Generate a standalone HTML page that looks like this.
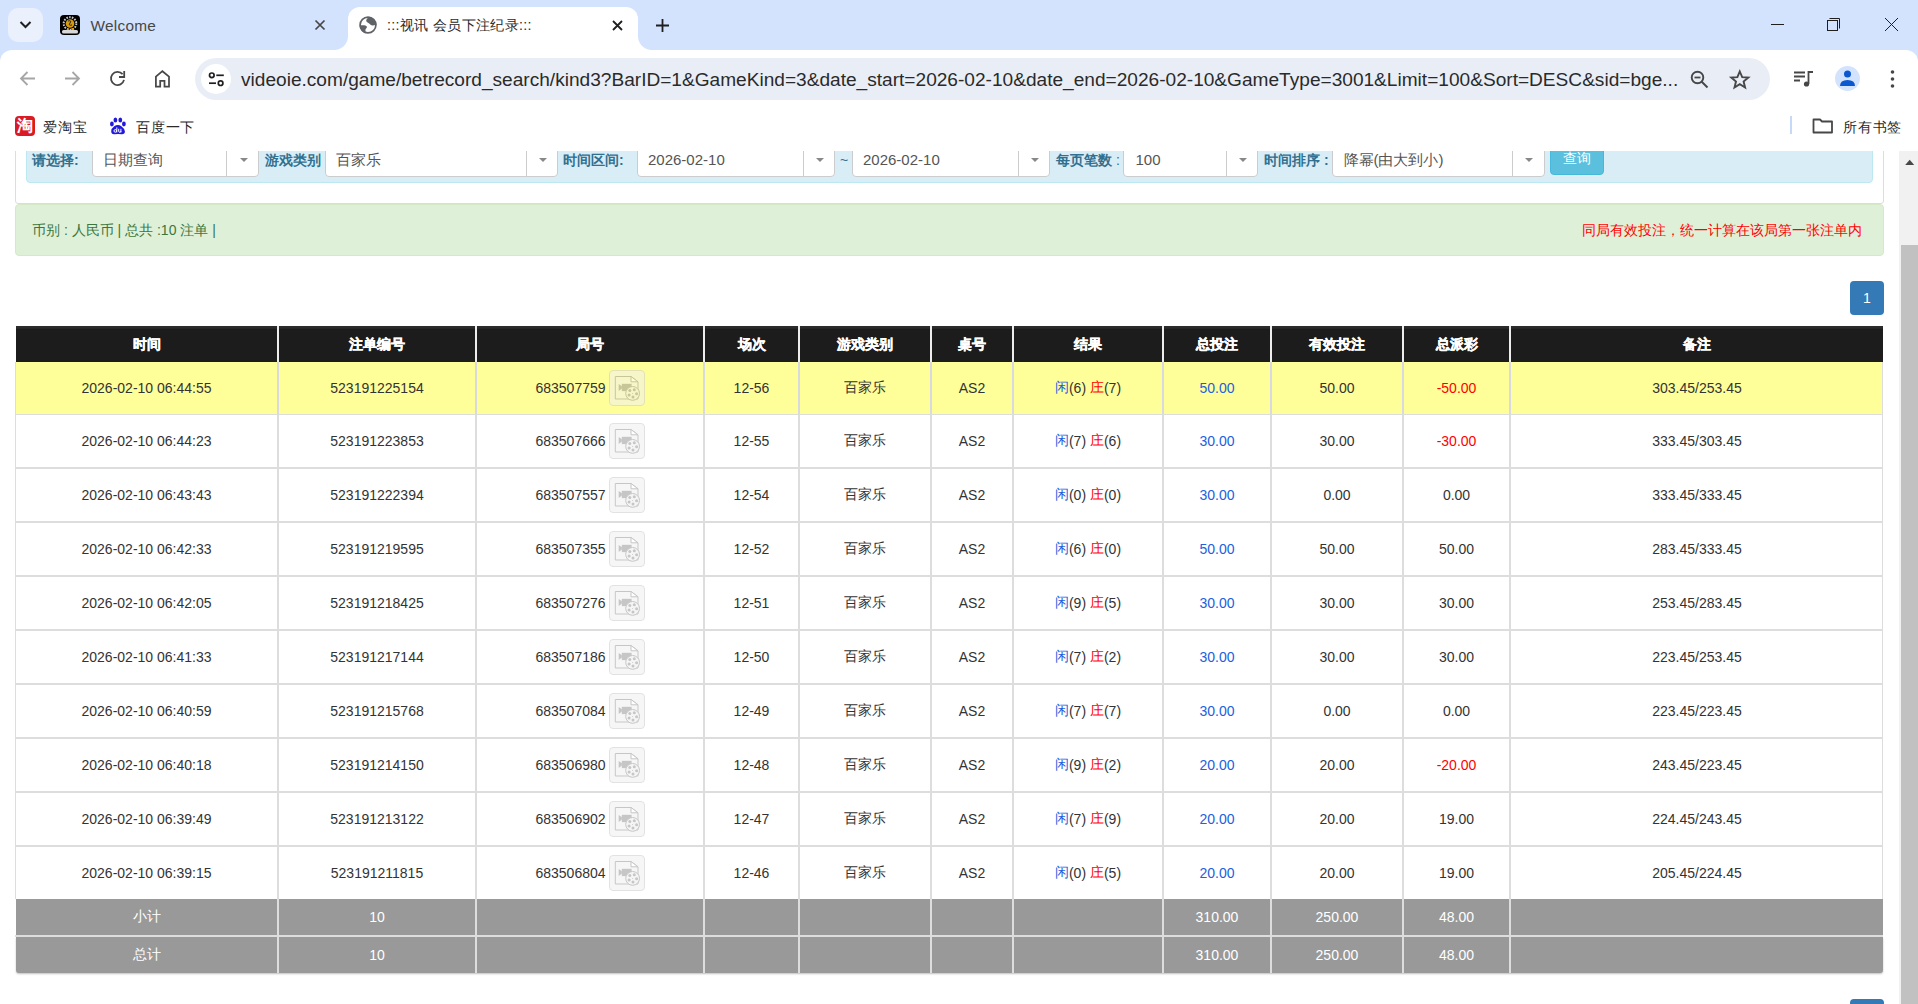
<!DOCTYPE html>
<html><head><meta charset="utf-8">
<style>
*{margin:0;padding:0;box-sizing:border-box}
html,body{width:1918px;height:1004px;overflow:hidden;background:#fff;font-family:"Liberation Sans",sans-serif;color:#333}
.abs{position:absolute}
#tabstrip{position:absolute;left:0;top:0;width:1918px;height:70px;background:#d3e3fd}
#toolbar{position:absolute;left:0;top:50px;width:1918px;height:101px;background:#fff;border-radius:12px 12px 0 0}
#bookmarks{position:absolute;left:0;top:104px;width:1918px;height:47px;background:#fff}
#content{position:absolute;left:0;top:151px;width:1899px;height:853px;background:#fff;overflow:hidden}
#scroll{position:absolute;left:1899px;top:151px;width:19px;height:853px;background:#f1f1f1}
.txt{position:absolute;white-space:nowrap;line-height:1}
svg{position:absolute;overflow:visible}
.c{position:absolute;display:flex;align-items:center;justify-content:center;font-size:14px;white-space:nowrap;color:#333}
.bl{color:#2161e0}.rd{color:#f00}
.c>span{display:flex;align-items:center;white-space:pre}
.ib{display:inline-block;flex:none;width:36px;height:36px;margin-left:3px;border:1px solid #ccc;border-radius:4px;background:#f0f0f0;opacity:.55;position:relative}
.ib svg{position:absolute;left:-1px;top:-1px;width:35px;height:35px}
.lb{position:absolute;top:152px;font-size:14px;line-height:16px;font-weight:bold;color:#31708f;white-space:nowrap}
.st{position:absolute;top:151px;font-size:15px;line-height:18px;color:#555;white-space:nowrap}
.sel{position:absolute;top:120px;height:57px;border:1px solid #ccc;border-radius:4px;background:#fff}
.sel i{position:absolute;top:0;bottom:0;width:1px;background:#ccc}
.sel b{position:absolute;top:37px;width:0;height:0;border-left:4px solid transparent;border-right:4px solid transparent;border-top:4.5px solid #888}
.pg{position:absolute;left:1850px;width:34px;height:34px;border-radius:4px;background:#337ab7;color:#fff;font-size:14px;line-height:34px;text-align:center}

</style></head><body>
<div id="tabstrip"></div>
<div class="abs" style="left:8px;top:8px;width:35px;height:34px;border-radius:10px;background:#eaf1fd"></div>
<div class="abs" style="left:348px;top:7px;width:290px;height:44px;background:#fff;border-radius:12px 12px 0 0"></div>
<div class="abs" style="left:334px;top:36px;width:14px;height:14px;background:radial-gradient(circle at 0 0,transparent 13.5px,#fff 14.5px)"></div>
<div class="abs" style="left:638px;top:36px;width:14px;height:14px;background:radial-gradient(circle at 14px 0,transparent 13.5px,#fff 14.5px)"></div>
<div id="toolbar"></div>
<div class="abs" style="left:195px;top:58px;width:1575px;height:42px;border-radius:21px;background:#e9eef6"></div>
<div class="abs" style="left:201px;top:64px;width:30px;height:30px;border-radius:15px;background:#fff"></div>
<div class="abs" style="left:1835px;top:66px;width:25px;height:25px;border-radius:13px;background:#d3e3fd"></div>
<div class="abs" style="left:15px;top:116px;width:20px;height:20px;border-radius:4px;background:#db1b24"></div>
<div class="abs" style="left:1790px;top:116px;width:2px;height:18px;background:#c7d9f8"></div>
<div class="abs" style="left:60px;top:15px;width:20px;height:20px;border-radius:4px;background:#000"></div>

<div class="txt" style="left:90.5px;top:15.5px;font-size:15.4px;line-height:19px;color:#474747;letter-spacing:0.25px">Welcome</div>
<div class="txt" style="left:387px;top:16px;font-size:14.2px;line-height:18px;color:#2a2a2a;letter-spacing:0.35px">:::视讯 会员下注纪录:::</div>
<div class="txt" style="left:241px;top:69px;font-size:19.1px;line-height:22px;color:#2a2a2a">videoie.com/game/betrecord_search/kind3?BarID=1&amp;GameKind=3&amp;date_start=2026-02-10&amp;date_end=2026-02-10&amp;GameType=3001&amp;Limit=100&amp;Sort=DESC&amp;sid=bge...</div>
<div class="txt" style="left:43px;top:118.5px;font-size:14.2px;line-height:17px;color:#2a2a2a;letter-spacing:0.8px">爱淘宝</div>
<div class="txt" style="left:136px;top:118.5px;font-size:14.2px;line-height:17px;color:#2a2a2a;letter-spacing:0.8px">百度一下</div>
<div class="txt" style="left:1843px;top:118.5px;font-size:14.2px;line-height:17px;color:#2a2a2a;letter-spacing:0.8px">所有书签</div>
<div class="txt" style="left:17px;top:117px;font-size:16px;line-height:18px;color:#fff;font-weight:bold">淘</div>

<svg style="left:0;top:0" width="1918" height="151">
 <!-- tab search chevron -->
 <path d="M20.5 22 L25.5 27 L30.5 22" fill="none" stroke="#1f1f1f" stroke-width="2"/>
 <!-- welcome favicon logo -->
 <g><circle cx="70" cy="23.5" r="6.3" fill="none" stroke="#c8c8c8" stroke-width="2" stroke-dasharray="1.6 1.2"/><circle cx="70" cy="23.5" r="4.3" fill="#d49a12"/><path d="M68 21 Q72 20 70 23 Q68 26 72 25" stroke="#222" stroke-width="1" fill="none"/>
 <rect x="62" y="30" width="16" height="3.4" rx="1.5" fill="#d8d8d8"/><rect x="67" y="28" width="1.6" height="2" fill="#e0a010"/><rect x="71.4" y="28" width="1.6" height="2" fill="#e0a010"/></g>
 <!-- inactive close -->
 <path d="M315.5 20.5 L324.5 29.5 M324.5 20.5 L315.5 29.5" stroke="#474747" stroke-width="1.7"/>
 <!-- globe -->
 <g transform="translate(368 25)" fill="#5f6368"><circle r="7.9" fill="none" stroke="#5f6368" stroke-width="1.7"/>
 <path d="M1 -8.2 C0 -7 -1.8 -5.8 -1.8 -4.2 C-1.8 -2.6 0.8 -2.2 1.8 -1 C2.8 0.6 4.5 0.8 8.5 -0.3 A8.6 8.6 0 0 0 1 -8.2 Z"/>
 <path d="M-8.5 0.4 C-5 -0.1 -2 0 -1.2 1.5 C-0.5 3 -2.6 3.5 -2.6 5 C-2.6 6.5 -2.2 7.8 -1.5 8.6 A8.6 8.6 0 0 1 -8.5 0.4 Z"/></g>
 <!-- active close -->
 <path d="M613 21 L622 30 M622 21 L613 30" stroke="#1f1f1f" stroke-width="1.8"/>
 <!-- new tab -->
 <path d="M662.5 19 V32 M656 25.5 H669" stroke="#1f1f1f" stroke-width="1.8"/>
 <!-- window controls -->
 <path d="M1771 24.5 H1784" stroke="#1f1f1f" stroke-width="1"/>
 <rect x="1827.5" y="20.5" width="10" height="10" fill="none" stroke="#1f1f1f"/><path d="M1829.5 18.5 H1839.5 V28.5" fill="none" stroke="#1f1f1f"/>
 <path d="M1885 18 L1898 31 M1898 18 L1885 31" stroke="#1f1f1f" stroke-width="1"/>
 <!-- back/forward -->
 <path d="M35 78.5 H21 M27.5 72 L21 78.5 L27.5 85" fill="none" stroke="#a6a6a6" stroke-width="1.8"/>
 <path d="M65 78.5 H79 M72.5 72 L79 78.5 L72.5 85" fill="none" stroke="#a6a6a6" stroke-width="1.8"/>
 <!-- reload -->
 <path d="M122.6 74.2 A6.6 6.6 0 1 0 124 79.9" fill="none" stroke="#474747" stroke-width="1.8"/>
 <path d="M119 77 H124.2 V71" fill="none" stroke="#474747" stroke-width="1.8"/>
 <!-- home -->
 <path d="M155.9 86.5 V76.6 L162.4 71.2 L169 76.6 V86.5 H164.5 V80.9 H160.2 V86.5 Z" fill="none" stroke="#474747" stroke-width="1.75" stroke-linejoin="miter"/>
 <!-- tune icon -->
 <circle cx="211.8" cy="75.3" r="2.3" fill="none" stroke="#1f1f1f" stroke-width="1.7"/><path d="M216.3 75.3 H223.8" stroke="#1f1f1f" stroke-width="1.7"/>
 <circle cx="220.6" cy="83.2" r="2.3" fill="none" stroke="#1f1f1f" stroke-width="1.7"/><path d="M209 83.2 H216" stroke="#1f1f1f" stroke-width="1.7"/>
 <!-- zoom -->
 <circle cx="1697.5" cy="77.5" r="5.8" fill="none" stroke="#474747" stroke-width="1.9"/><path d="M1701.5 81.5 L1707.5 87.5" stroke="#474747" stroke-width="2"/><path d="M1694.5 77.5 H1700.5" stroke="#474747" stroke-width="1.8"/>
 <!-- star -->
 <path d="M1739.8 71.5 L1742.2 77.2 L1748.3 77.6 L1743.6 81.5 L1745.1 87.5 L1739.8 84.2 L1734.5 87.5 L1736 81.5 L1731.3 77.6 L1737.4 77.2 Z" fill="none" stroke="#474747" stroke-width="1.9" stroke-linejoin="miter"/>
 <!-- media -->
 <path d="M1794 72.5 H1805 M1794 76.5 H1805 M1794 80.5 H1800" stroke="#474747" stroke-width="1.8"/>
 <path d="M1808.5 84 V72 H1813" fill="none" stroke="#474747" stroke-width="1.8"/><circle cx="1806.5" cy="84" r="2.6" fill="#474747"/>
 <!-- profile -->
 <circle cx="1847.5" cy="74" r="3.5" fill="#0b57d0"/><path d="M1840 86 Q1840 80 1847.5 80 Q1855 80 1855 86 Z" fill="#0b57d0"/>
 <!-- menu -->
 <circle cx="1892.5" cy="72" r="1.8" fill="#474747"/><circle cx="1892.5" cy="79" r="1.8" fill="#474747"/><circle cx="1892.5" cy="86" r="1.8" fill="#474747"/>
 <!-- baidu paw -->
 <g fill="#2319dc"><ellipse cx="115.4" cy="120" rx="1.9" ry="2.5"/><ellipse cx="120.3" cy="120" rx="1.9" ry="2.5"/><ellipse cx="111.9" cy="124" rx="1.9" ry="2.4"/><ellipse cx="123.9" cy="124" rx="1.9" ry="2.4"/>
 <path d="M111.2 131.3 Q111.2 128.3 114.2 126.2 Q117.9 123.6 121.4 126.2 Q124.9 128.8 124.9 131.6 Q124.9 134.4 121.6 134.2 Q117.9 133.8 114.6 134.2 Q111.2 134.5 111.2 131.3 Z"/></g>
 <g fill="none" stroke="#fff" stroke-width="1"><circle cx="115.3" cy="130.9" r="1.3"/><path d="M116.8 127.4 V132.4 M118.7 128.8 V131.2 Q118.7 132.3 119.8 132.3 Q120.9 132.3 120.9 131.2 V128.8 M120.9 131 V132.4"/></g>
 <!-- folder -->
 <path d="M1813.5 119.5 H1820 L1822 121.5 H1832 V132.5 H1813.5 Z" fill="none" stroke="#474747" stroke-width="1.8" stroke-linejoin="round"/>
</svg>

<div id="content"><div class="abs" style="left:0;top:-151px;width:1899px;height:1004px">
<div class="abs" style="left:15px;top:100px;width:1869px;height:104px;border:1px solid #ddd;border-radius:0 0 3px 3px;background:#fff"></div>
<div class="abs" style="left:26px;top:100px;width:1847px;height:83px;border:1px solid #bce8f1;border-radius:4px;background:#d9edf7"></div>
<div class="lb" style="left:32px">请选择:</div>
<div class="sel" style="left:92px;width:167px"><i style="left:133px"></i><b style="left:147px"></b></div>
<div class="st" style="left:103px">日期查询</div>
<div class="lb" style="left:265px">游戏类别</div>
<div class="sel" style="left:325px;width:233px"><i style="left:200px"></i><b style="left:213px"></b></div>
<div class="st" style="left:336px">百家乐</div>
<div class="lb" style="left:563px">时间区间:</div>
<div class="sel" style="left:637px;width:198px"><i style="left:165px"></i><b style="left:178px"></b></div>
<div class="st" style="left:648px">2026-02-10</div>
<div class="lb" style="left:840px;font-weight:normal">~</div>
<div class="sel" style="left:852px;width:198px"><i style="left:165px"></i><b style="left:178px"></b></div>
<div class="st" style="left:863px">2026-02-10</div>
<div class="lb" style="left:1056px">每页笔数<span style="font-weight:normal"> :</span></div>
<div class="sel" style="left:1123px;width:135px"><i style="left:102px"></i><b style="left:115px"></b></div>
<div class="st" style="left:1135.5px">100</div>
<div class="lb" style="left:1264px">时间排序 :</div>
<div class="sel" style="left:1332px;width:213px"><i style="left:179px"></i><b style="left:192px"></b></div>
<div class="st" style="left:1343.5px">降幂(由大到小)</div>
<div class="abs" style="left:1550px;top:130px;width:54px;height:45px;border:1px solid #46b8da;border-radius:4px;background:#5bc0de"></div>
<div class="txt" style="left:1563px;top:150px;font-size:14px;line-height:16px;color:#fff">查询</div>

<div class="abs" style="left:15px;top:204px;width:1869px;height:52px;border:1px solid #d6e9c6;border-radius:4px;background:#dff0d8"></div>
<div class="txt" style="left:32px;top:222px;font-size:14px;line-height:16px;color:#3c763d">币别 : 人民币 | 总共 :10 注单 |</div>
<div class="txt" style="left:1582px;top:222px;font-size:14px;line-height:16px;color:#f00">同局有效投注，统一计算在该局第一张注单内</div>

<div class="pg" style="top:281px">1</div>
<div class="pg" style="top:999px">1</div>

<div class="abs" style="left:16px;top:326px;width:1867px;height:36px;background:linear-gradient(#2b2b2b 0,#2b2b2b 2px,#1c1c1c 3.5px)"></div>
<div class="c" style="left:16px;top:326px;width:261px;height:36px;color:#fff;font-weight:bold;padding-top:2px;-webkit-text-stroke:0.35px #fff"><span>时间</span></div>
<div class="c" style="left:279px;top:326px;width:196px;height:36px;color:#fff;font-weight:bold;padding-top:2px;-webkit-text-stroke:0.35px #fff"><span>注单编号</span></div>
<div class="c" style="left:477px;top:326px;width:226px;height:36px;color:#fff;font-weight:bold;padding-top:2px;-webkit-text-stroke:0.35px #fff"><span>局号</span></div>
<div class="c" style="left:705px;top:326px;width:93px;height:36px;color:#fff;font-weight:bold;padding-top:2px;-webkit-text-stroke:0.35px #fff"><span>场次</span></div>
<div class="c" style="left:800px;top:326px;width:130px;height:36px;color:#fff;font-weight:bold;padding-top:2px;-webkit-text-stroke:0.35px #fff"><span>游戏类别</span></div>
<div class="c" style="left:932px;top:326px;width:80px;height:36px;color:#fff;font-weight:bold;padding-top:2px;-webkit-text-stroke:0.35px #fff"><span>桌号</span></div>
<div class="c" style="left:1014px;top:326px;width:148px;height:36px;color:#fff;font-weight:bold;padding-top:2px;-webkit-text-stroke:0.35px #fff"><span>结果</span></div>
<div class="c" style="left:1164px;top:326px;width:106px;height:36px;color:#fff;font-weight:bold;padding-top:2px;-webkit-text-stroke:0.35px #fff"><span>总投注</span></div>
<div class="c" style="left:1272px;top:326px;width:130px;height:36px;color:#fff;font-weight:bold;padding-top:2px;-webkit-text-stroke:0.35px #fff"><span>有效投注</span></div>
<div class="c" style="left:1404px;top:326px;width:105px;height:36px;color:#fff;font-weight:bold;padding-top:2px;-webkit-text-stroke:0.35px #fff"><span>总派彩</span></div>
<div class="c" style="left:1511px;top:326px;width:372px;height:36px;color:#fff;font-weight:bold;padding-top:2px;-webkit-text-stroke:0.35px #fff"><span>备注</span></div>
<div class="abs" style="left:16px;top:362px;width:1867px;height:52px;background:#ffff99"></div>
<div class="abs" style="left:15px;top:414px;width:1868px;height:1px;background:#ddd"></div>
<div class="c" style="left:16px;top:362px;width:261px;height:52px;"><span>2026-02-10 06:44:55</span></div>
<div class="c" style="left:279px;top:362px;width:196px;height:52px;"><span>523191225154</span></div>
<div class="c" style="left:477px;top:362px;width:226px;height:52px;"><span>683507759<span class="ib"><svg width="26" height="26" viewBox="0 0 26 26"><use href="#vid"/></svg></span></span></div>
<div class="c" style="left:705px;top:362px;width:93px;height:52px;"><span>12-56</span></div>
<div class="c" style="left:800px;top:362px;width:130px;height:52px;"><span>百家乐</span></div>
<div class="c" style="left:932px;top:362px;width:80px;height:52px;"><span>AS2</span></div>
<div class="c" style="left:1014px;top:362px;width:148px;height:52px;"><span><span class="bl">闲</span>(6) <span class="rd">庄</span>(7)</span></div>
<div class="c" style="left:1164px;top:362px;width:106px;height:52px;"><span><span class="bl">50.00</span></span></div>
<div class="c" style="left:1272px;top:362px;width:130px;height:52px;"><span>50.00</span></div>
<div class="c" style="left:1404px;top:362px;width:105px;height:52px;"><span><span class="rd">-50.00</span></span></div>
<div class="c" style="left:1511px;top:362px;width:372px;height:52px;"><span>303.45/253.45</span></div>
<div class="abs" style="left:16px;top:415px;width:1867px;height:52px;background:#fff"></div>
<div class="abs" style="left:15px;top:467px;width:1868px;height:2px;background:#ddd"></div>
<div class="c" style="left:16px;top:415px;width:261px;height:52px;"><span>2026-02-10 06:44:23</span></div>
<div class="c" style="left:279px;top:415px;width:196px;height:52px;"><span>523191223853</span></div>
<div class="c" style="left:477px;top:415px;width:226px;height:52px;"><span>683507666<span class="ib"><svg width="26" height="26" viewBox="0 0 26 26"><use href="#vid"/></svg></span></span></div>
<div class="c" style="left:705px;top:415px;width:93px;height:52px;"><span>12-55</span></div>
<div class="c" style="left:800px;top:415px;width:130px;height:52px;"><span>百家乐</span></div>
<div class="c" style="left:932px;top:415px;width:80px;height:52px;"><span>AS2</span></div>
<div class="c" style="left:1014px;top:415px;width:148px;height:52px;"><span><span class="bl">闲</span>(7) <span class="rd">庄</span>(6)</span></div>
<div class="c" style="left:1164px;top:415px;width:106px;height:52px;"><span><span class="bl">30.00</span></span></div>
<div class="c" style="left:1272px;top:415px;width:130px;height:52px;"><span>30.00</span></div>
<div class="c" style="left:1404px;top:415px;width:105px;height:52px;"><span><span class="rd">-30.00</span></span></div>
<div class="c" style="left:1511px;top:415px;width:372px;height:52px;"><span>333.45/303.45</span></div>
<div class="abs" style="left:16px;top:469px;width:1867px;height:52px;background:#fff"></div>
<div class="abs" style="left:15px;top:521px;width:1868px;height:2px;background:#ddd"></div>
<div class="c" style="left:16px;top:469px;width:261px;height:52px;"><span>2026-02-10 06:43:43</span></div>
<div class="c" style="left:279px;top:469px;width:196px;height:52px;"><span>523191222394</span></div>
<div class="c" style="left:477px;top:469px;width:226px;height:52px;"><span>683507557<span class="ib"><svg width="26" height="26" viewBox="0 0 26 26"><use href="#vid"/></svg></span></span></div>
<div class="c" style="left:705px;top:469px;width:93px;height:52px;"><span>12-54</span></div>
<div class="c" style="left:800px;top:469px;width:130px;height:52px;"><span>百家乐</span></div>
<div class="c" style="left:932px;top:469px;width:80px;height:52px;"><span>AS2</span></div>
<div class="c" style="left:1014px;top:469px;width:148px;height:52px;"><span><span class="bl">闲</span>(0) <span class="rd">庄</span>(0)</span></div>
<div class="c" style="left:1164px;top:469px;width:106px;height:52px;"><span><span class="bl">30.00</span></span></div>
<div class="c" style="left:1272px;top:469px;width:130px;height:52px;"><span>0.00</span></div>
<div class="c" style="left:1404px;top:469px;width:105px;height:52px;"><span>0.00</span></div>
<div class="c" style="left:1511px;top:469px;width:372px;height:52px;"><span>333.45/333.45</span></div>
<div class="abs" style="left:16px;top:523px;width:1867px;height:52px;background:#fff"></div>
<div class="abs" style="left:15px;top:575px;width:1868px;height:2px;background:#ddd"></div>
<div class="c" style="left:16px;top:523px;width:261px;height:52px;"><span>2026-02-10 06:42:33</span></div>
<div class="c" style="left:279px;top:523px;width:196px;height:52px;"><span>523191219595</span></div>
<div class="c" style="left:477px;top:523px;width:226px;height:52px;"><span>683507355<span class="ib"><svg width="26" height="26" viewBox="0 0 26 26"><use href="#vid"/></svg></span></span></div>
<div class="c" style="left:705px;top:523px;width:93px;height:52px;"><span>12-52</span></div>
<div class="c" style="left:800px;top:523px;width:130px;height:52px;"><span>百家乐</span></div>
<div class="c" style="left:932px;top:523px;width:80px;height:52px;"><span>AS2</span></div>
<div class="c" style="left:1014px;top:523px;width:148px;height:52px;"><span><span class="bl">闲</span>(6) <span class="rd">庄</span>(0)</span></div>
<div class="c" style="left:1164px;top:523px;width:106px;height:52px;"><span><span class="bl">50.00</span></span></div>
<div class="c" style="left:1272px;top:523px;width:130px;height:52px;"><span>50.00</span></div>
<div class="c" style="left:1404px;top:523px;width:105px;height:52px;"><span>50.00</span></div>
<div class="c" style="left:1511px;top:523px;width:372px;height:52px;"><span>283.45/333.45</span></div>
<div class="abs" style="left:16px;top:577px;width:1867px;height:52px;background:#fff"></div>
<div class="abs" style="left:15px;top:629px;width:1868px;height:2px;background:#ddd"></div>
<div class="c" style="left:16px;top:577px;width:261px;height:52px;"><span>2026-02-10 06:42:05</span></div>
<div class="c" style="left:279px;top:577px;width:196px;height:52px;"><span>523191218425</span></div>
<div class="c" style="left:477px;top:577px;width:226px;height:52px;"><span>683507276<span class="ib"><svg width="26" height="26" viewBox="0 0 26 26"><use href="#vid"/></svg></span></span></div>
<div class="c" style="left:705px;top:577px;width:93px;height:52px;"><span>12-51</span></div>
<div class="c" style="left:800px;top:577px;width:130px;height:52px;"><span>百家乐</span></div>
<div class="c" style="left:932px;top:577px;width:80px;height:52px;"><span>AS2</span></div>
<div class="c" style="left:1014px;top:577px;width:148px;height:52px;"><span><span class="bl">闲</span>(9) <span class="rd">庄</span>(5)</span></div>
<div class="c" style="left:1164px;top:577px;width:106px;height:52px;"><span><span class="bl">30.00</span></span></div>
<div class="c" style="left:1272px;top:577px;width:130px;height:52px;"><span>30.00</span></div>
<div class="c" style="left:1404px;top:577px;width:105px;height:52px;"><span>30.00</span></div>
<div class="c" style="left:1511px;top:577px;width:372px;height:52px;"><span>253.45/283.45</span></div>
<div class="abs" style="left:16px;top:631px;width:1867px;height:52px;background:#fff"></div>
<div class="abs" style="left:15px;top:683px;width:1868px;height:2px;background:#ddd"></div>
<div class="c" style="left:16px;top:631px;width:261px;height:52px;"><span>2026-02-10 06:41:33</span></div>
<div class="c" style="left:279px;top:631px;width:196px;height:52px;"><span>523191217144</span></div>
<div class="c" style="left:477px;top:631px;width:226px;height:52px;"><span>683507186<span class="ib"><svg width="26" height="26" viewBox="0 0 26 26"><use href="#vid"/></svg></span></span></div>
<div class="c" style="left:705px;top:631px;width:93px;height:52px;"><span>12-50</span></div>
<div class="c" style="left:800px;top:631px;width:130px;height:52px;"><span>百家乐</span></div>
<div class="c" style="left:932px;top:631px;width:80px;height:52px;"><span>AS2</span></div>
<div class="c" style="left:1014px;top:631px;width:148px;height:52px;"><span><span class="bl">闲</span>(7) <span class="rd">庄</span>(2)</span></div>
<div class="c" style="left:1164px;top:631px;width:106px;height:52px;"><span><span class="bl">30.00</span></span></div>
<div class="c" style="left:1272px;top:631px;width:130px;height:52px;"><span>30.00</span></div>
<div class="c" style="left:1404px;top:631px;width:105px;height:52px;"><span>30.00</span></div>
<div class="c" style="left:1511px;top:631px;width:372px;height:52px;"><span>223.45/253.45</span></div>
<div class="abs" style="left:16px;top:685px;width:1867px;height:52px;background:#fff"></div>
<div class="abs" style="left:15px;top:737px;width:1868px;height:2px;background:#ddd"></div>
<div class="c" style="left:16px;top:685px;width:261px;height:52px;"><span>2026-02-10 06:40:59</span></div>
<div class="c" style="left:279px;top:685px;width:196px;height:52px;"><span>523191215768</span></div>
<div class="c" style="left:477px;top:685px;width:226px;height:52px;"><span>683507084<span class="ib"><svg width="26" height="26" viewBox="0 0 26 26"><use href="#vid"/></svg></span></span></div>
<div class="c" style="left:705px;top:685px;width:93px;height:52px;"><span>12-49</span></div>
<div class="c" style="left:800px;top:685px;width:130px;height:52px;"><span>百家乐</span></div>
<div class="c" style="left:932px;top:685px;width:80px;height:52px;"><span>AS2</span></div>
<div class="c" style="left:1014px;top:685px;width:148px;height:52px;"><span><span class="bl">闲</span>(7) <span class="rd">庄</span>(7)</span></div>
<div class="c" style="left:1164px;top:685px;width:106px;height:52px;"><span><span class="bl">30.00</span></span></div>
<div class="c" style="left:1272px;top:685px;width:130px;height:52px;"><span>0.00</span></div>
<div class="c" style="left:1404px;top:685px;width:105px;height:52px;"><span>0.00</span></div>
<div class="c" style="left:1511px;top:685px;width:372px;height:52px;"><span>223.45/223.45</span></div>
<div class="abs" style="left:16px;top:739px;width:1867px;height:52px;background:#fff"></div>
<div class="abs" style="left:15px;top:791px;width:1868px;height:2px;background:#ddd"></div>
<div class="c" style="left:16px;top:739px;width:261px;height:52px;"><span>2026-02-10 06:40:18</span></div>
<div class="c" style="left:279px;top:739px;width:196px;height:52px;"><span>523191214150</span></div>
<div class="c" style="left:477px;top:739px;width:226px;height:52px;"><span>683506980<span class="ib"><svg width="26" height="26" viewBox="0 0 26 26"><use href="#vid"/></svg></span></span></div>
<div class="c" style="left:705px;top:739px;width:93px;height:52px;"><span>12-48</span></div>
<div class="c" style="left:800px;top:739px;width:130px;height:52px;"><span>百家乐</span></div>
<div class="c" style="left:932px;top:739px;width:80px;height:52px;"><span>AS2</span></div>
<div class="c" style="left:1014px;top:739px;width:148px;height:52px;"><span><span class="bl">闲</span>(9) <span class="rd">庄</span>(2)</span></div>
<div class="c" style="left:1164px;top:739px;width:106px;height:52px;"><span><span class="bl">20.00</span></span></div>
<div class="c" style="left:1272px;top:739px;width:130px;height:52px;"><span>20.00</span></div>
<div class="c" style="left:1404px;top:739px;width:105px;height:52px;"><span><span class="rd">-20.00</span></span></div>
<div class="c" style="left:1511px;top:739px;width:372px;height:52px;"><span>243.45/223.45</span></div>
<div class="abs" style="left:16px;top:793px;width:1867px;height:52px;background:#fff"></div>
<div class="abs" style="left:15px;top:845px;width:1868px;height:2px;background:#ddd"></div>
<div class="c" style="left:16px;top:793px;width:261px;height:52px;"><span>2026-02-10 06:39:49</span></div>
<div class="c" style="left:279px;top:793px;width:196px;height:52px;"><span>523191213122</span></div>
<div class="c" style="left:477px;top:793px;width:226px;height:52px;"><span>683506902<span class="ib"><svg width="26" height="26" viewBox="0 0 26 26"><use href="#vid"/></svg></span></span></div>
<div class="c" style="left:705px;top:793px;width:93px;height:52px;"><span>12-47</span></div>
<div class="c" style="left:800px;top:793px;width:130px;height:52px;"><span>百家乐</span></div>
<div class="c" style="left:932px;top:793px;width:80px;height:52px;"><span>AS2</span></div>
<div class="c" style="left:1014px;top:793px;width:148px;height:52px;"><span><span class="bl">闲</span>(7) <span class="rd">庄</span>(9)</span></div>
<div class="c" style="left:1164px;top:793px;width:106px;height:52px;"><span><span class="bl">20.00</span></span></div>
<div class="c" style="left:1272px;top:793px;width:130px;height:52px;"><span>20.00</span></div>
<div class="c" style="left:1404px;top:793px;width:105px;height:52px;"><span>19.00</span></div>
<div class="c" style="left:1511px;top:793px;width:372px;height:52px;"><span>224.45/243.45</span></div>
<div class="abs" style="left:16px;top:847px;width:1867px;height:52px;background:#fff"></div>
<div class="c" style="left:16px;top:847px;width:261px;height:52px;"><span>2026-02-10 06:39:15</span></div>
<div class="c" style="left:279px;top:847px;width:196px;height:52px;"><span>523191211815</span></div>
<div class="c" style="left:477px;top:847px;width:226px;height:52px;"><span>683506804<span class="ib"><svg width="26" height="26" viewBox="0 0 26 26"><use href="#vid"/></svg></span></span></div>
<div class="c" style="left:705px;top:847px;width:93px;height:52px;"><span>12-46</span></div>
<div class="c" style="left:800px;top:847px;width:130px;height:52px;"><span>百家乐</span></div>
<div class="c" style="left:932px;top:847px;width:80px;height:52px;"><span>AS2</span></div>
<div class="c" style="left:1014px;top:847px;width:148px;height:52px;"><span><span class="bl">闲</span>(0) <span class="rd">庄</span>(5)</span></div>
<div class="c" style="left:1164px;top:847px;width:106px;height:52px;"><span><span class="bl">20.00</span></span></div>
<div class="c" style="left:1272px;top:847px;width:130px;height:52px;"><span>20.00</span></div>
<div class="c" style="left:1404px;top:847px;width:105px;height:52px;"><span>19.00</span></div>
<div class="c" style="left:1511px;top:847px;width:372px;height:52px;"><span>205.45/224.45</span></div>
<div class="abs" style="left:16px;top:899px;width:1867px;height:36px;background:#999;"></div>
<div class="c" style="left:16px;top:899px;width:261px;height:36px;color:#fff"><span>小计</span></div>
<div class="c" style="left:279px;top:899px;width:196px;height:36px;color:#fff"><span>10</span></div>
<div class="c" style="left:477px;top:899px;width:226px;height:36px;color:#fff"><span></span></div>
<div class="c" style="left:705px;top:899px;width:93px;height:36px;color:#fff"><span></span></div>
<div class="c" style="left:800px;top:899px;width:130px;height:36px;color:#fff"><span></span></div>
<div class="c" style="left:932px;top:899px;width:80px;height:36px;color:#fff"><span></span></div>
<div class="c" style="left:1014px;top:899px;width:148px;height:36px;color:#fff"><span></span></div>
<div class="c" style="left:1164px;top:899px;width:106px;height:36px;color:#fff"><span>310.00</span></div>
<div class="c" style="left:1272px;top:899px;width:130px;height:36px;color:#fff"><span>250.00</span></div>
<div class="c" style="left:1404px;top:899px;width:105px;height:36px;color:#fff"><span>48.00</span></div>
<div class="c" style="left:1511px;top:899px;width:372px;height:36px;color:#fff"><span></span></div>
<div class="abs" style="left:16px;top:937px;width:1867px;height:36px;background:#999;border-radius:0 0 3px 3px;box-shadow:0 1px 2px rgba(0,0,0,.25);"></div>
<div class="c" style="left:16px;top:937px;width:261px;height:36px;color:#fff"><span>总计</span></div>
<div class="c" style="left:279px;top:937px;width:196px;height:36px;color:#fff"><span>10</span></div>
<div class="c" style="left:477px;top:937px;width:226px;height:36px;color:#fff"><span></span></div>
<div class="c" style="left:705px;top:937px;width:93px;height:36px;color:#fff"><span></span></div>
<div class="c" style="left:800px;top:937px;width:130px;height:36px;color:#fff"><span></span></div>
<div class="c" style="left:932px;top:937px;width:80px;height:36px;color:#fff"><span></span></div>
<div class="c" style="left:1014px;top:937px;width:148px;height:36px;color:#fff"><span></span></div>
<div class="c" style="left:1164px;top:937px;width:106px;height:36px;color:#fff"><span>310.00</span></div>
<div class="c" style="left:1272px;top:937px;width:130px;height:36px;color:#fff"><span>250.00</span></div>
<div class="c" style="left:1404px;top:937px;width:105px;height:36px;color:#fff"><span>48.00</span></div>
<div class="c" style="left:1511px;top:937px;width:372px;height:36px;color:#fff"><span></span></div>
<div class="abs" style="left:15px;top:935px;width:1868px;height:2px;background:#ddd"></div>
<div class="abs" style="left:277px;top:326px;width:2px;height:647px;background:#ddd"></div>
<div class="abs" style="left:277px;top:326px;width:2px;height:36px;background:#ededed"></div>
<div class="abs" style="left:277px;top:362px;width:2px;height:52px;background:#d9d9e1"></div>
<div class="abs" style="left:475px;top:326px;width:2px;height:647px;background:#ddd"></div>
<div class="abs" style="left:475px;top:326px;width:2px;height:36px;background:#ededed"></div>
<div class="abs" style="left:475px;top:362px;width:2px;height:52px;background:#d9d9e1"></div>
<div class="abs" style="left:703px;top:326px;width:2px;height:647px;background:#ddd"></div>
<div class="abs" style="left:703px;top:326px;width:2px;height:36px;background:#ededed"></div>
<div class="abs" style="left:703px;top:362px;width:2px;height:52px;background:#d9d9e1"></div>
<div class="abs" style="left:798px;top:326px;width:2px;height:647px;background:#ddd"></div>
<div class="abs" style="left:798px;top:326px;width:2px;height:36px;background:#ededed"></div>
<div class="abs" style="left:798px;top:362px;width:2px;height:52px;background:#d9d9e1"></div>
<div class="abs" style="left:930px;top:326px;width:2px;height:647px;background:#ddd"></div>
<div class="abs" style="left:930px;top:326px;width:2px;height:36px;background:#ededed"></div>
<div class="abs" style="left:930px;top:362px;width:2px;height:52px;background:#d9d9e1"></div>
<div class="abs" style="left:1012px;top:326px;width:2px;height:647px;background:#ddd"></div>
<div class="abs" style="left:1012px;top:326px;width:2px;height:36px;background:#ededed"></div>
<div class="abs" style="left:1012px;top:362px;width:2px;height:52px;background:#d9d9e1"></div>
<div class="abs" style="left:1162px;top:326px;width:2px;height:647px;background:#ddd"></div>
<div class="abs" style="left:1162px;top:326px;width:2px;height:36px;background:#ededed"></div>
<div class="abs" style="left:1162px;top:362px;width:2px;height:52px;background:#d9d9e1"></div>
<div class="abs" style="left:1270px;top:326px;width:2px;height:647px;background:#ddd"></div>
<div class="abs" style="left:1270px;top:326px;width:2px;height:36px;background:#ededed"></div>
<div class="abs" style="left:1270px;top:362px;width:2px;height:52px;background:#d9d9e1"></div>
<div class="abs" style="left:1402px;top:326px;width:2px;height:647px;background:#ddd"></div>
<div class="abs" style="left:1402px;top:326px;width:2px;height:36px;background:#ededed"></div>
<div class="abs" style="left:1402px;top:362px;width:2px;height:52px;background:#d9d9e1"></div>
<div class="abs" style="left:1509px;top:326px;width:2px;height:647px;background:#ddd"></div>
<div class="abs" style="left:1509px;top:326px;width:2px;height:36px;background:#ededed"></div>
<div class="abs" style="left:1509px;top:362px;width:2px;height:52px;background:#d9d9e1"></div>
<div class="abs" style="left:15px;top:362px;width:1px;height:537px;background:#ddd"></div>
<div class="abs" style="left:1882px;top:362px;width:1px;height:537px;background:#ddd"></div>
</div></div>
<svg width="0" height="0" style="position:absolute"><defs><symbol id="vid" viewBox="0 0 35 35">
<path d="M6.3 6.5 H22 L29 11.8 V29 H6.3 Z" fill="none" stroke="#999" stroke-width="1"/>
<path d="M22 6.5 V11.8 H29 Z" fill="#fff" stroke="#999" stroke-width="1"/>
<rect x="12.8" y="13.8" width="9.8" height="7.3" fill="#999"/>
<path d="M9.7 13.9 L12.9 16.2 V18.6 L9.7 21 Z" fill="#999"/>
<circle cx="23.6" cy="23.4" r="6.9" fill="#eee" stroke="#999" stroke-width="1"/>
<g fill="#999"><circle cx="20.8" cy="20.6" r="1.5"/><circle cx="25.3" cy="19.8" r="1.5"/><circle cx="27.6" cy="23.7" r="1.5"/><circle cx="24" cy="27.1" r="1.5"/><circle cx="20.1" cy="25" r="1.5"/><circle cx="23.6" cy="23.4" r=".5"/></g>
</symbol></defs></svg>
<div id="scroll"><div class="abs" style="left:2px;top:94px;width:17px;height:760px;background:#c1c1c1"></div><svg style="left:0;top:0" width="19" height="20"><path d="M6.2 14 L15.2 14 L10.7 8.8 Z" fill="#474747"/></svg></div>
</body></html>
